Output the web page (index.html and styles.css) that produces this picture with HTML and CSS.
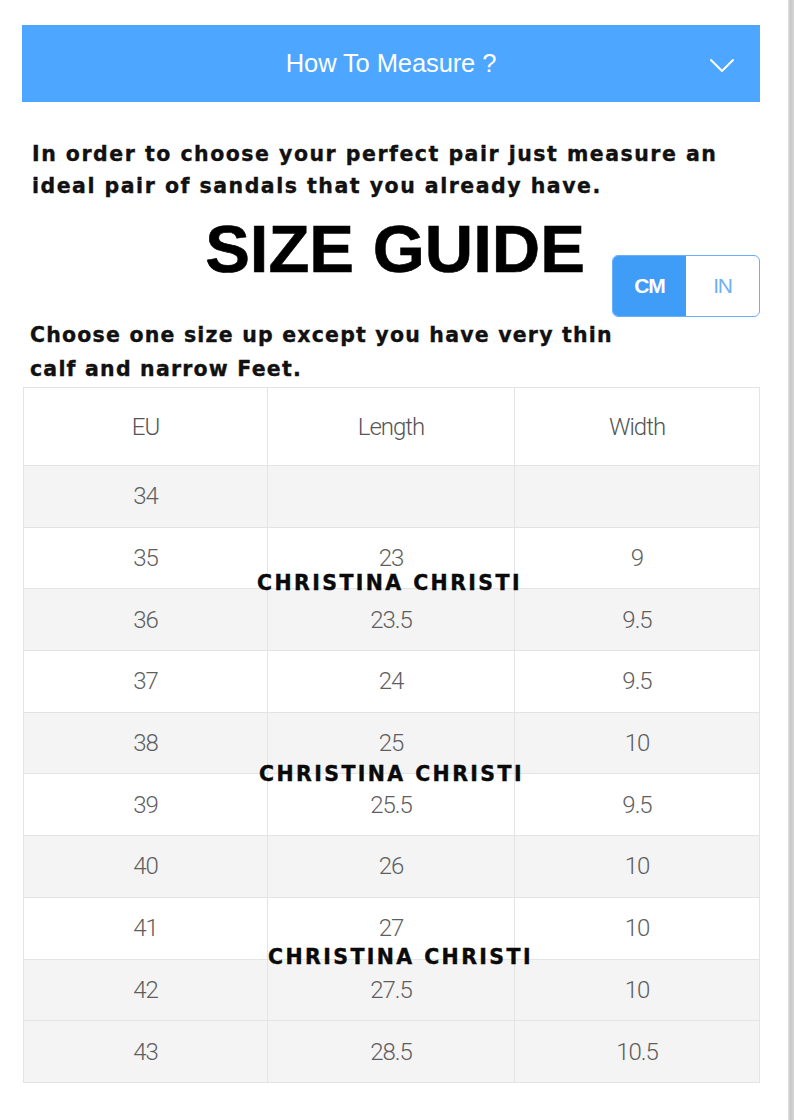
FILE: index.html
```html
<!DOCTYPE html>
<html>
<head>
<meta charset="utf-8">
<link rel="stylesheet" href="styles.css">
</head>
<body>
<div class="page">
  <div class="content">
    <div class="accordion">
      <span class="acc-title">How To Measure ?</span>
      <svg class="chev" width="26" height="16" viewBox="0 0 26 16"><path d="M2 2 L13 13 L24 2" fill="none" stroke="#ffffff" stroke-width="2" stroke-linecap="round" stroke-linejoin="round"/></svg>
    </div>
    <p class="intro">In order to choose your perfect pair just measure an<br>ideal pair of sandals that you already have.</p>
    <div class="title-row">
      <div></div>
      <h1 class="title">SIZE GUIDE</h1>
      <div class="toggle">
        <span class="opt active">CM</span>
        <span class="opt">IN</span>
      </div>
    </div>
    <p class="note">Choose one size up except you have very thin<br>calf and narrow Feet.</p>
    <div class="table-wrap">
      <table class="sizes">
        <thead>
          <tr class="head"><th>EU</th><th>Length</th><th>Width</th></tr>
        </thead>
        <tbody>
          <tr class="g"><td>34</td><td></td><td></td></tr>
          <tr><td>35</td><td>23</td><td>9</td></tr>
          <tr class="g"><td>36</td><td>23.5</td><td>9.5</td></tr>
          <tr><td>37</td><td>24</td><td>9.5</td></tr>
          <tr class="g"><td>38</td><td>25</td><td>10</td></tr>
          <tr><td>39</td><td>25.5</td><td>9.5</td></tr>
          <tr class="g"><td>40</td><td>26</td><td>10</td></tr>
          <tr><td>41</td><td>27</td><td>10</td></tr>
          <tr class="g"><td>42</td><td>27.5</td><td>10</td></tr>
          <tr class="g"><td>43</td><td>28.5</td><td>10.5</td></tr>
        </tbody>
      </table>
      <span class="wm wm1">CHRISTINA CHRISTI</span>
      <span class="wm wm2">CHRISTINA CHRISTI</span>
      <span class="wm wm3">CHRISTINA CHRISTI</span>
    </div>
  </div>
  <div class="scrollbar"></div>
</div>
</body>
</html>
```

FILE: styles.css
```css
* { box-sizing: border-box; }
html, body { margin: 0; padding: 0; background: #ffffff; }
.page {
  width: 794px;
  height: 1120px;
  display: flex;
  overflow: hidden;
}
.content {
  width: 788px;
  padding: 25px 28px 0 22px;
}
.scrollbar {
  width: 6px;
  height: 1120px;
  background: linear-gradient(to right, #e2e2e2, #c8c8c8 40%, #d6d6d6);
}
.accordion {
  height: 77px;
  background: #4da6ff;
  display: flex;
  align-items: center;
  justify-content: center;
  position: relative;
}
.acc-title {
  font-family: "Liberation Sans", Arial, sans-serif;
  font-size: 25.5px;
  color: #ffffff;
  letter-spacing: -0.1px;
}
.chev {
  position: absolute;
  right: 25px;
  top: 33px;
}
.intro {
  margin: 36px 0 0 10px;
  font-family: "DejaVu Sans", Verdana, sans-serif;
  font-weight: bold;
  font-size: 20.5px;
  letter-spacing: 1.5px;
  line-height: 32px;
  color: #111;
  white-space: nowrap;
  -webkit-text-stroke: 0.35px #111;
}
.title-row {
  display: grid;
  grid-template-columns: 1fr auto 1fr;
  align-items: start;
  height: 120px;
}
.title {
  margin: 12px 0 0 8px;
  font-family: "Liberation Sans", Arial, sans-serif;
  font-weight: bold;
  font-size: 67px;
  line-height: 70px;
  color: #000;
  -webkit-text-stroke: 0.6px #000;
}
.toggle {
  justify-self: end;
  margin-top: 53px;
  width: 148px;
  height: 62px;
  display: flex;
  border: 1.5px solid #6aaefc;
  border-radius: 6px;
  overflow: hidden;
}
.opt {
  flex: 1;
  display: flex;
  align-items: center;
  justify-content: center;
  font-family: "Liberation Sans", Arial, sans-serif;
  font-size: 21px;
  letter-spacing: -1.2px;
  color: #6cb0f6;
}
.opt.active {
  background: #3f9cf7;
  color: #ffffff;
  font-weight: bold;
}
.note {
  margin: -4px 0 0 8px;
  font-family: "DejaVu Sans", Verdana, sans-serif;
  font-weight: bold;
  font-size: 20.5px;
  letter-spacing: 1.2px;
  line-height: 34px;
  color: #111;
  white-space: nowrap;
  -webkit-text-stroke: 0.35px #111;
}
.table-wrap {
  position: relative;
  margin-top: 1px;
  margin-left: 1px;
}
.sizes {
  width: 737px;
  border-collapse: collapse;
  table-layout: fixed;
  font-family: Roboto, "Liberation Sans", Arial, sans-serif;
  font-weight: 300;
  color: #5e5e5e;
}
.sizes th, .sizes td {
  border: 1px solid #e4e4e4;
  text-align: center;
  font-weight: 300;
  font-size: 24px;
  letter-spacing: -1px;
  height: 61.7px;
  padding: 0;
}
.sizes th:nth-child(1), .sizes td:nth-child(1) { width: 244px; }
.sizes th:nth-child(2), .sizes td:nth-child(2) { width: 247px; }
.sizes tr.head th { height: 78px; color: #555; }
.sizes tr.g td { background: #f4f4f4; }
.wm {
  position: absolute;
  font-family: "DejaVu Sans", Verdana, sans-serif;
  font-weight: bold;
  font-size: 20.5px;
  letter-spacing: 2.4px;
  color: #0a0a0a;
  white-space: nowrap;
  line-height: 22px;
  -webkit-text-stroke: 0.4px #0a0a0a;
}
.wm1 { left: 234px; top: 185px; }
.wm2 { left: 236px; top: 376px; }
.wm3 { left: 245px; top: 559px; }
```
